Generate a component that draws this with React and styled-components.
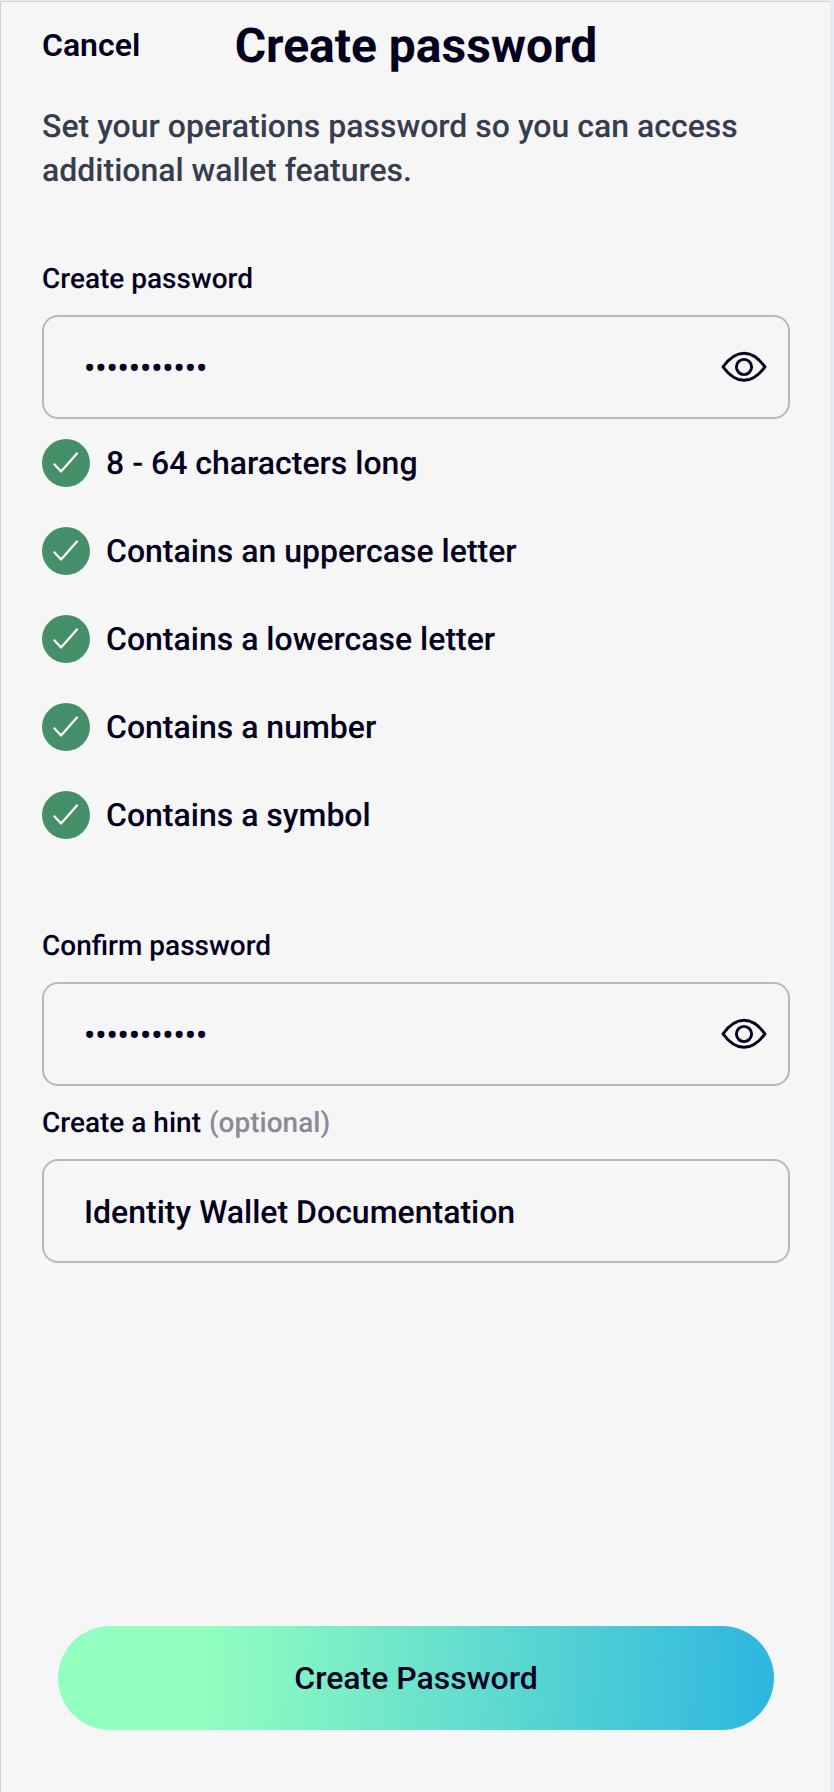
import React from "react";
import styled, { createGlobalStyle } from "styled-components";

const GlobalStyle = createGlobalStyle`
  * { box-sizing: border-box; }
  body {
    margin: 0;
    background: #e5eaf4;
    font-family: Roboto, "Liberation Sans", sans-serif;
    color: #03001e;
    text-rendering: geometricPrecision;
  }
`;

const Screen = styled.main`
  display: flex;
  flex-direction: column;
  width: 830px;
  height: 1791px;
  margin-top: 1px;
  padding: 0 40px 62px 41px;
  background: #f6f6f6;
  border-top: 1px solid #d0d3d8;
  border-left: 1px solid #d0d0d3;
`;

const Header = styled.header`
  display: grid;
  grid-template-columns: 1fr auto 1fr;
  align-items: center;
  height: 87px;
`;

const CancelButton = styled.button`
  justify-self: start;
  padding: 0 0 2px;
  border: 0;
  background: none;
  color: inherit;
  font: 600 32px/44px Roboto, "Liberation Sans", sans-serif;
`;

const Title = styled.h1`
  margin: 0;
  font-size: 48px;
  font-weight: 700;
  line-height: 56px;
`;

const Intro = styled.p`
  margin: 15px 0 66px;
  color: #363d4e;
  font-size: 32px;
  font-weight: 500;
  line-height: 44px;
`;

const Field = styled.div`
  display: flex;
  flex-direction: column;
  gap: 15px;
  margin-bottom: ${({ $gap }) => $gap || 0}px;
`;

const Label = styled.span`
  font-size: 28px;
  font-weight: 500;
  line-height: 42px;
`;

const Optional = styled.span`
  margin-left: 1px;
  color: #8b8a99;
`;

const InputBox = styled.div`
  display: flex;
  align-items: center;
  justify-content: space-between;
  height: 104px;
  padding: 0 20px 0 40px;
  border: 2px solid #b9b9b9;
  border-radius: 16px;
  font-size: 32px;
  font-weight: 500;
`;

const Value = styled.span`
  padding-top: 2px;
`;

const EyeIcon = styled.svg`
  width: 48px;
  height: 48px;
`;

const Rules = styled.ul`
  display: flex;
  flex-direction: column;
  gap: 40px;
  margin: 0 0 86px;
  padding: 0;
  list-style: none;
`;

const Rule = styled.li`
  display: flex;
  align-items: center;
  gap: 16px;
  height: 48px;
  font-size: 32px;
  font-weight: 500;
`;

const CheckBadge = styled.svg`
  width: 48px;
  height: 48px;
`;

const SubmitButton = styled.button`
  height: 104px;
  margin: auto 16px 0;
  padding: 0;
  border: 0;
  border-radius: 52px;
  background: linear-gradient(93deg, #92ffc0 20.5%, #2bb5e0 101%);
  color: inherit;
  font: 500 32px/44px Roboto, "Liberation Sans", sans-serif;
`;

const rules = [
  "8 - 64 characters long",
  "Contains an uppercase letter",
  "Contains a lowercase letter",
  "Contains a number",
  "Contains a symbol",
];

function Eye() {
  return (
    <EyeIcon viewBox="0 0 48 48" fill="none" stroke="#03001e" strokeWidth="2.9" strokeLinejoin="round">
      <path d="M3 23.800C8 17 15 10.300 24 10.300S40 17 45 23.800C40 30.600 33 37.300 24 37.300S8 30.600 3 23.800Z" />
      <circle cx="24" cy="24" r="7.600" />
    </EyeIcon>
  );
}

function PasswordField({ label, gap }) {
  return (
    <Field $gap={gap}>
      <Label>{label}</Label>
      <InputBox>
        <Value>{"•".repeat(11)}</Value>
        <Eye />
      </InputBox>
    </Field>
  );
}

export default function App() {
  return (
    <>
      <GlobalStyle />
      <Screen>
        <Header>
          <CancelButton>Cancel</CancelButton>
          <Title>Create password</Title>
        </Header>
        <Intro>Set your operations password so you can access additional wallet features.</Intro>
        <PasswordField label="Create password" gap={20} />
        <Rules>
          {rules.map((text) => (
            <Rule key={text}>
              <CheckBadge viewBox="0 0 48 48" fill="none">
                <circle cx="24" cy="24" r="24" fill="#469069" />
                <path d="M12.300 25.300L19 32.500L35 14.500" stroke="#fff" strokeWidth="2.200" strokeLinecap="round" strokeLinejoin="round" />
              </CheckBadge>
              {text}
            </Rule>
          ))}
        </Rules>
        <PasswordField label="Confirm password" gap={16} />
        <Field>
          <Label>
            Create a hint <Optional>(optional)</Optional>
          </Label>
          <InputBox>
            <Value>Identity Wallet Documentation</Value>
          </InputBox>
        </Field>
        <SubmitButton>Create Password</SubmitButton>
      </Screen>
    </>
  );
}
